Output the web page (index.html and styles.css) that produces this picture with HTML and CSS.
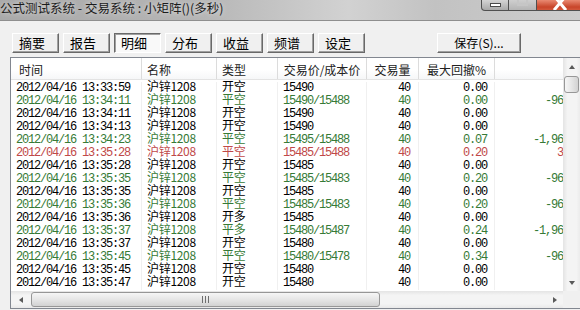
FILE: index.html
```html
<!DOCTYPE html>
<html lang="zh">
<head>
  <meta charset="UTF-8">
  <title>公式测试系统</title>
  <link rel="stylesheet" href="styles.css">
</head>
<body>
  <div class="win">
    <div class="titlebar">
      <span class="title">公式测试系统 - 交易系统 : 小矩阵()(多秒)</span>
      <div class="caption">
        <span class="cb min"><i></i></span>
        <span class="cb max"><i></i></span>
        <span class="cb close">
          <svg width="14" height="12" viewBox="0 0 14 12"><path d="M2 -3 L12 9 M12 -3 L2 9" stroke="#fff" stroke-width="3" stroke-linecap="square"/></svg>
        </span>
      </div>
    </div>

    <div class="toolbar">
      <button class="btn">摘要</button>
      <button class="btn">报告</button>
      <button class="btn active">明细</button>
      <button class="btn">分布</button>
      <button class="btn">收益</button>
      <button class="btn">频谱</button>
      <button class="btn">设定</button>
      <button class="btn save">保存(S)...</button>
    </div>

    <div class="list">
      <div class="view">
        <div class="row head">
          <span>时间</span><span>名称</span><span>类型</span><span>交易价/成本价</span><span>交易量</span><span>最大回撤%</span><span></span>
        </div>
        <div class="rows">
          <div class="row"><span>2012/04/16 13:33:59</span><span>沪锌1208</span><span>开空</span><span>15490</span><span>40</span><span>0.00</span><span></span></div>
          <div class="row g"><span>2012/04/16 13:34:11</span><span>沪锌1208</span><span>平空</span><span>15490/15488</span><span>40</span><span>0.00</span><span>-960</span></div>
          <div class="row"><span>2012/04/16 13:34:11</span><span>沪锌1208</span><span>开空</span><span>15490</span><span>40</span><span>0.00</span><span></span></div>
          <div class="row"><span>2012/04/16 13:34:13</span><span>沪锌1208</span><span>开空</span><span>15490</span><span>40</span><span>0.00</span><span></span></div>
          <div class="row g"><span>2012/04/16 13:34:23</span><span>沪锌1208</span><span>平空</span><span>15495/15488</span><span>40</span><span>0.07</span><span>-1,960</span></div>
          <div class="row r"><span>2012/04/16 13:35:28</span><span>沪锌1208</span><span>平空</span><span>15485/15488</span><span>40</span><span>0.20</span><span>30</span></div>
          <div class="row"><span>2012/04/16 13:35:28</span><span>沪锌1208</span><span>开空</span><span>15485</span><span>40</span><span>0.00</span><span></span></div>
          <div class="row g"><span>2012/04/16 13:35:35</span><span>沪锌1208</span><span>平空</span><span>15485/15483</span><span>40</span><span>0.20</span><span>-960</span></div>
          <div class="row"><span>2012/04/16 13:35:35</span><span>沪锌1208</span><span>开空</span><span>15485</span><span>40</span><span>0.00</span><span></span></div>
          <div class="row g"><span>2012/04/16 13:35:36</span><span>沪锌1208</span><span>平空</span><span>15485/15483</span><span>40</span><span>0.20</span><span>-960</span></div>
          <div class="row"><span>2012/04/16 13:35:36</span><span>沪锌1208</span><span>开多</span><span>15485</span><span>40</span><span>0.00</span><span></span></div>
          <div class="row g"><span>2012/04/16 13:35:37</span><span>沪锌1208</span><span>平多</span><span>15480/15487</span><span>40</span><span>0.24</span><span>-1,960</span></div>
          <div class="row"><span>2012/04/16 13:35:37</span><span>沪锌1208</span><span>开空</span><span>15480</span><span>40</span><span>0.00</span><span></span></div>
          <div class="row g"><span>2012/04/16 13:35:45</span><span>沪锌1208</span><span>平空</span><span>15480/15478</span><span>40</span><span>0.34</span><span>-960</span></div>
          <div class="row"><span>2012/04/16 13:35:45</span><span>沪锌1208</span><span>开空</span><span>15480</span><span>40</span><span>0.00</span><span></span></div>
          <div class="row"><span>2012/04/16 13:35:47</span><span>沪锌1208</span><span>开空</span><span>15480</span><span>40</span><span>0.00</span><span></span></div>
        </div>
      </div>
      <div class="vscroll">
        <span class="arrow up"></span>
        <span class="thumb"></span>
        <span class="track"></span>
        <span class="arrow down"></span>
      </div>
      <div class="hscroll">
        <span class="arrow left"></span>
        <span class="thumb"><i></i></span>
        <span class="track"></span>
        <span class="arrow right"></span>
      </div>
      <div class="corner"></div>
    </div>
  </div>
</body>
</html>
```

FILE: styles.css
```css
/* reset */
* {
  margin: 0;
  padding: 0;
  box-sizing: border-box;
}
body {
  background-color: #f0f0f0;
  font: 12px "Noto Sans CJK SC", "Liberation Sans", sans-serif;
  color: #000;
}
.win {
  width: 580px;
  height: 310px;
  overflow: hidden;
  background-color: #f0f0f0;
}

/* title bar */
.titlebar {
  display: flex;
  align-items: flex-start;
  height: 21px;
  background: linear-gradient(90deg, #a9a9a9 0%, #b6b6b6 35%, #d2d2d2 60%, #c2c2c2 75%, #cdcdcd 100%);
  border-bottom: 1px solid #8e8e8e;
}
.titlebar .title {
  line-height: 15px;
  font-size: 12.5px;
  color: #1c1c1c;
  text-shadow: 0 0 5px rgba(255, 255, 255, .7);
  white-space: nowrap;
}
.caption {
  display: flex;
  margin-left: auto;
  margin-right: -3px;
}
.cb {
  display: flex;
  justify-content: center;
  align-items: flex-start;
  height: 11px;
  border: 1px solid #505050;
  border-top: 0;
  overflow: hidden;
}
.cb.min {
  width: 28px;
  margin-left: -1px;
  border-radius: 0 0 0 4px;
  background: linear-gradient(#d4d4d4, #a9a9a9);
}
.cb.min i {
  width: 11px;
  height: 4px;
  margin-top: 3px;
  background-color: #fff;
  border: 1px solid #4a4a4a;
}
.cb.max {
  width: 28px;
  border-left: 0;
  background: linear-gradient(#cfcfcf, #b4b4b4);
}
.cb.max i {
  width: 11px;
  height: 9px;
  margin-top: -3px;
  border: 2px solid #c6c6c6;
}
.cb.close {
  width: 46px;
  border-left: 0;
  background: linear-gradient(#e98a72, #c8452a 70%, #d2583c);
}
.cb.close svg {
  display: block;
}

/* toolbar */
.toolbar {
  display: flex;
  gap: 4px;
  padding: 12px 59px 0 12px;
}
.btn {
  width: 47px;
  height: 20px;
  padding-left: 6px;
  text-align: left;
  font: 13px/18px "Noto Sans CJK SC", sans-serif;
  color: #000;
  background-color: #f0f0f0;
  border: 1px solid;
  border-color: #fff #696969 #696969 #fff;
  box-shadow: inset -1px -1px #a0a0a0;
}
.btn.active {
  background-color: #f9f9f9;
  border-color: #696969 #fff #fff #696969;
  box-shadow: inset 1px 1px #a0a0a0;
}
.btn.save {
  width: 84px;
  margin-left: auto;
  padding-left: 0;
  text-align: center;
  font-size: 12px;
}

/* list */
.list {
  display: grid;
  grid-template-columns: 552px 18px;
  grid-template-rows: 233px 17px;
  margin: 4px -2px 0 10px;
  border: 1px solid #828790;
  background-color: #fff;
}
.view {
  overflow: hidden;
  background-color: #fff;
}
.row {
  display: grid;
  grid-template-columns: 131px 75px 61px 89px 52px 76px 93px;
  height: 13px;
  white-space: nowrap;
}
.row span {
  padding-left: 5px;
  border-right: 1px solid #f0f0f0;
  font: 12px/13px "Liberation Mono", monospace;
  letter-spacing: -1.2px;
}
.row span:nth-child(2),
.row span:nth-child(3) {
  font-family: "Noto Sans CJK SC", sans-serif;
  line-height: 7px;
  letter-spacing: -0.3px;
}
.row span:nth-child(5) {
  text-align: right;
  padding: 0 8px 0 0;
}
.row span:nth-child(6) {
  text-align: right;
  padding: 0 7px 0 0;
}
.row span:nth-child(7) {
  text-align: right;
  padding: 0 18px 0 0;
}
.row.g {
  color: #367a36;
}
.row.r {
  color: #c04848;
}
.rows {
  padding-top: 2px;
}

.row.head {
  height: 22px;
  border-bottom: 1px solid #e3e3e3;
  background: linear-gradient(#fff 55%, #f6f7f8);
}
.row.head span {
  padding: 2px 0 0 5px;
  border-right-color: #dcdcdc;
  font: 12px/19px "Noto Sans CJK SC", sans-serif;
  letter-spacing: 0;
  color: #222;
}
.row.head span:nth-child(1) {
  padding-left: 8px;
}
.row.head span:nth-child(n+4) {
  text-align: center;
  padding-left: 0;
  padding-right: 0;
}

/* scrollbars */
.vscroll,
.hscroll {
  display: flex;
}
.vscroll {
  flex-direction: column;
  background: linear-gradient(90deg, #e4e4e4, #f4f4f4 25%, #f4f4f4 75%, #e9e9e9);
}
.hscroll {
  background: linear-gradient(#e4e4e4, #f4f4f4 25%, #f4f4f4 75%, #e9e9e9);
}
.track {
  flex: 1;
}
.arrow {
  display: flex;
  justify-content: center;
  align-items: center;
  flex: none;
}
.arrow::before {
  content: "";
  width: 0;
  height: 0;
  border: 4px solid transparent;
}
.vscroll .arrow {
  height: 17px;
}
.hscroll .arrow {
  width: 19px;
}
.hscroll .arrow.right {
  width: 17px;
}
.arrow.up::before {
  border-top: 0;
  border-bottom-color: #5a5a5a;
  border-left-width: 3.5px;
  border-right-width: 3.5px;
}
.arrow.down::before {
  border-bottom: 0;
  border-top-color: #5a5a5a;
  border-left-width: 3.5px;
  border-right-width: 3.5px;
}
.arrow.left::before {
  border-left: 0;
  border-right-color: #5a5a5a;
  border-top-width: 3.5px;
  border-bottom-width: 3.5px;
}
.arrow.right::before {
  border-right: 0;
  border-left-color: #5a5a5a;
  border-top-width: 3.5px;
  border-bottom-width: 3.5px;
}
.thumb {
  flex: none;
  border: 1px solid #979797;
  border-radius: 3px;
}
.vscroll .thumb {
  height: 17px;
  margin: 1px 2px 0 1px;
  background: linear-gradient(90deg, #f6f6f6, #e6e6e6 50%, #d2d2d2);
}
.hscroll .thumb {
  display: flex;
  justify-content: center;
  align-items: center;
  width: 349px;
  margin: 1px 0 1px 1px;
  background: linear-gradient(#f6f6f6, #e6e6e6 50%, #d2d2d2);
}
.hscroll .thumb i {
  width: 7px;
  height: 7px;
  background: linear-gradient(90deg, #6e6e6e 1px, transparent 1px) 0 0 / 3px 7px repeat-x;
}
.corner {
  background-color: #f0f0f0;
}
```
